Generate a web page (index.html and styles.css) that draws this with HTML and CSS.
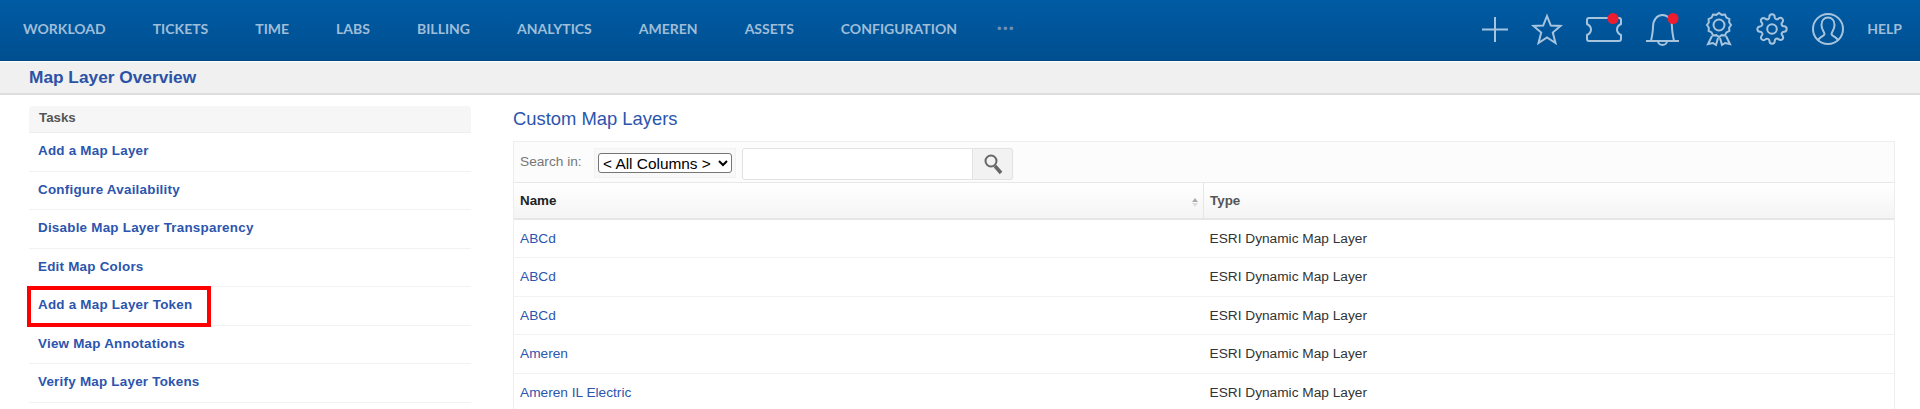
FILE: index.html
```html
<!DOCTYPE html>
<html lang="en">
<head>
  <meta charset="UTF-8" />
  <title>Map Layer Overview</title>
  <link rel="stylesheet" href="styles.css">
</head>
<body>
  <header class="topbar">
    <nav class="main-nav">
      <a href="#">WORKLOAD</a>
      <a href="#">TICKETS</a>
      <a href="#">TIME</a>
      <a href="#">LABS</a>
      <a href="#">BILLING</a>
      <a href="#">ANALYTICS</a>
      <a href="#">AMEREN</a>
      <a href="#">ASSETS</a>
      <a href="#">CONFIGURATION</a>
      <span class="more-dots">•••</span>
    </nav>
    <div class="top-icons">
      <svg class="icon" width="26" height="34" viewBox="0 0 26 34"><path d="M0 17.5H26M13 5V30"/></svg>
      <svg class="icon" width="30" height="34" viewBox="0 0 30 34"><polygon points="15,4 18.8,13.6 28.5,14 20.8,20.5 23.5,31 15,25.5 6.5,31 9.2,20.5 1.5,14 11.2,13.6"/></svg>
      <svg class="icon" width="36" height="34" viewBox="0 0 36 34">
        <path d="M3 6H33Q35 6 35 8V12Q31 14 31 17.5Q31 21 35 23V27Q35 29 33 29H3Q1 29 1 27V23Q5 21 5 17.5Q5 14 1 12V8Q1 6 3 6Z"/>
        <circle class="icon-dot" cx="27" cy="6.5" r="5.5"/>
      </svg>
      <svg class="icon" width="36" height="34" viewBox="0 0 36 34">
        <path d="M0 29H33M5 29C6 24 7 20 7 15C7 8 11 3 16.5 3C22 3 26 8 26 15C26 20 27 24 28 29M12 29A4.5 4 0 0 0 21 29"/>
        <circle class="icon-dot" cx="27" cy="6.5" r="5.5"/>
      </svg>
      <svg class="icon" width="26" height="34" viewBox="0 0 26 34">
        <polygon points="25,13 23.14,15.72 23.39,19 20.42,20.42 19,23.39 15.72,23.14 13,25 10.28,23.14 7,23.39 5.58,20.42 2.61,19 2.86,15.72 1,13 2.86,10.28 2.61,7 5.58,5.58 7,2.61 10.28,2.86 13,1 15.72,2.86 19,2.61 20.42,5.58 23.39,7 23.14,10.28"/>
        <circle cx="13" cy="13" r="5.5"/>
        <path d="M6 24L2 32L7 31L10 33L12 26M20 24L24 32L19 31L16 33L14 26"/>
      </svg>
      <svg class="icon icon-gear" width="32" height="34" viewBox="0 -0.75 24 25.5">
        <circle cx="12" cy="12" r="3.6"/>
        <path d="M19.4 15a1.65 1.65 0 0 0 .33 1.82l.06.06a2 2 0 0 1 0 2.83 2 2 0 0 1-2.83 0l-.06-.06a1.65 1.65 0 0 0-1.82-.33 1.65 1.65 0 0 0-1 1.51V21a2 2 0 0 1-2 2 2 2 0 0 1-2-2v-.09A1.65 1.65 0 0 0 9 19.4a1.65 1.65 0 0 0-1.82.33l-.06.06a2 2 0 0 1-2.83 0 2 2 0 0 1 0-2.83l.06-.06a1.65 1.65 0 0 0 .33-1.82 1.65 1.65 0 0 0-1.51-1H3a2 2 0 0 1-2-2 2 2 0 0 1 2-2h.09A1.65 1.65 0 0 0 4.6 9a1.65 1.65 0 0 0-.33-1.82l-.06-.06a2 2 0 0 1 0-2.83 2 2 0 0 1 2.83 0l.06.06a1.65 1.65 0 0 0 1.82.33H9a1.65 1.65 0 0 0 1-1.51V3a2 2 0 0 1 2-2 2 2 0 0 1 2 2v.09a1.65 1.65 0 0 0 1 1.51 1.65 1.65 0 0 0 1.82-.33l.06-.06a2 2 0 0 1 2.83 0 2 2 0 0 1 0 2.83l-.06.06a1.65 1.65 0 0 0-.33 1.82V9a1.65 1.65 0 0 0 1.51 1H21a2 2 0 0 1 2 2 2 2 0 0 1-2 2h-.09a1.65 1.65 0 0 0-1.51 1z"/>
      </svg>
      <svg class="icon" width="32" height="34" viewBox="0 0 32 34">
        <circle cx="16" cy="17" r="15"/>
        <path d="M6 28.5C7 25 12 24.5 12.5 22C12.5 20 9.5 18 9.5 13C9.5 8 12.5 5.5 16 5.5C19.5 5.5 22.5 8 22.5 13C22.5 18 19.5 20 19.5 22C20 24.5 25 25 26 28.5"/>
      </svg>
      <a class="help-link" href="#">HELP</a>
    </div>
  </header>

  <div class="title-bar">Map Layer Overview</div>

  <div class="content">
    <aside class="tasks">
      <div class="tasks-head">Tasks</div>
      <ul class="task-list">
        <li><a href="#">Add a Map Layer</a></li>
        <li><a href="#">Configure Availability</a></li>
        <li><a href="#">Disable Map Layer Transparency</a></li>
        <li><a href="#">Edit Map Colors</a></li>
        <li class="marked"><a href="#">Add a Map Layer Token</a><span class="red-box"></span></li>
        <li><a href="#">View Map Annotations</a></li>
        <li><a href="#">Verify Map Layer Tokens</a></li>
      </ul>
    </aside>

    <main class="layers">
      <h2>Custom Map Layers</h2>
      <div class="grid-box">
        <div class="search-row">
          <span class="search-label">Search in:</span>
          <div class="select-wrap">
            <select class="column-select">
              <option>&lt; All Columns &gt;</option>
            </select>
          </div>
          <input class="search-input" type="text" />
          <button class="search-btn" type="button">
            <svg width="20" height="22" viewBox="0 0 20 22"><circle cx="8" cy="8" r="5.5"/><path class="handle" d="M12 13L18 20"/></svg>
          </button>
        </div>
        <table class="grid">
          <thead>
            <tr>
              <th class="col-name">Name<span class="sorter"></span></th>
              <th class="col-type">Type</th>
            </tr>
          </thead>
          <tbody>
            <tr><td><a href="#">ABCd</a></td><td>ESRI Dynamic Map Layer</td></tr>
            <tr><td><a href="#">ABCd</a></td><td>ESRI Dynamic Map Layer</td></tr>
            <tr><td><a href="#">ABCd</a></td><td>ESRI Dynamic Map Layer</td></tr>
            <tr><td><a href="#">Ameren</a></td><td>ESRI Dynamic Map Layer</td></tr>
            <tr><td><a href="#">Ameren IL Electric</a></td><td>ESRI Dynamic Map Layer</td></tr>
          </tbody>
        </table>
      </div>
    </main>
  </div>
</body>
</html>
```

FILE: styles.css
```css
:root {
  --nav-text: #9fbdd8;
  --link: #2c55ad;
  --line: #f2f2f2;
}

html, body {
  height: 409px;
  overflow: hidden;
}

body {
  margin: 0;
  background: #fff;
  font-family: "Liberation Sans", Arial, sans-serif;
  font-size: 13.7px;
  color: #333;
}

a {
  text-decoration: none;
  color: var(--link);
}

.topbar {
  height: 61px;
  box-sizing: border-box;
  padding: 0 18px 3px 23px;
  display: flex;
  justify-content: space-between;
  align-items: center;
  background: linear-gradient(#005ba4, #004f90);
  border-bottom: 1px solid #00457f;
}

.main-nav {
  display: flex;
  align-items: center;
  gap: 47px;
}

.main-nav a,
.help-link {
  font-family: Lato, sans-serif;
  font-size: 14px;
  font-weight: 700;
  color: var(--nav-text);
}

.more-dots {
  margin-left: -7px;
  font-size: 13px;
  letter-spacing: 1.5px;
  color: #6f90b2;
}

.top-icons {
  display: flex;
  align-items: center;
  gap: 24px;
}

.icon {
  overflow: visible;
  fill: none;
  stroke: #a6c4de;
  stroke-width: 2;
}

.icon-gear {
  stroke-width: 1.5;
}

.icon-dot {
  fill: #ed1c2e;
  stroke: none;
}

.help-link {
  margin-left: -1px;
}

.main-nav a {
  letter-spacing: 0;
}

.title-bar {
  margin-top: 1px;
  height: 31px;
  padding-left: 29px;
  line-height: 31px;
  background: #f0f0f0;
  border-bottom: 2px solid #ddd;
  font-size: 17.3px;
  font-weight: bold;
  color: #2c52a5;
}

.content {
  display: flex;
  gap: 42px;
  padding: 11px 25px 0 29px;
}

.tasks {
  width: 442px;
  flex: none;
}

.tasks-head {
  height: 26px;
  padding-left: 10px;
  line-height: 23px;
  background: #f6f6f6;
  border-bottom: 1px solid #eee;
  border-radius: 3px 3px 0 0;
  font-size: 13.3px;
  font-weight: bold;
  color: #555;
}

.task-list {
  list-style: none;
  margin: 0;
  padding: 0;
}

.task-list li {
  position: relative;
  height: 38.5px;
  box-sizing: border-box;
  padding-left: 9px;
  line-height: 35px;
  border-bottom: 1px solid var(--line);
}

.task-list a {
  font-size: 13.4px;
  font-weight: bold;
  letter-spacing: 0.24px;
}

.red-box {
  position: absolute;
  left: -2px;
  top: -1px;
  width: 184px;
  height: 41px;
  box-sizing: border-box;
  border: 4px solid #f00;
}

.layers {
  flex: 1;
  min-width: 0;
}

.layers h2 {
  margin: 0;
  height: 25px;
  padding-bottom: 10px;
  line-height: 26px;
  font-size: 18.4px;
  font-weight: normal;
  color: var(--link);
}

.grid-box {
  border: 1px solid #eee;
  border-bottom: none;
}

.search-row {
  height: 41px;
  box-sizing: border-box;
  padding: 6px 0 0 6px;
  display: flex;
  background: #fcfcfc;
  border-bottom: 1px solid #e8e8e8;
}

.search-label {
  width: 74px;
  flex: none;
  line-height: 28px;
  color: #777;
}

.select-wrap {
  height: 30px;
  box-sizing: border-box;
  padding: 4px 3px;
  margin-right: 6px;
  background: #f8f8f8;
  border: 1px solid #f2f2f2;
}

.column-select {
  display: block;
  width: 134px;
  height: 20px;
  padding: 0;
  border: 1px solid #767676;
  border-radius: 3px;
  background: #fff;
  font-family: "Liberation Sans", Arial, sans-serif;
  font-size: 15.4px;
  color: #000;
}

.search-input {
  width: 231px;
  height: 32px;
  box-sizing: border-box;
  border: 1px solid #e2e2e2;
  border-radius: 3px 0 0 3px;
  background: #fff;
}

.search-btn {
  width: 40px;
  height: 32px;
  padding: 0;
  display: flex;
  align-items: center;
  justify-content: center;
  background: #f2f2f2;
  border: 1px solid #e2e2e2;
  border-left: none;
  border-radius: 0 3px 3px 0;
}

.search-btn svg {
  fill: none;
  stroke: #666;
  stroke-width: 2;
}

.search-btn .handle {
  stroke-width: 3.5;
}

.grid {
  width: 100%;
  border-collapse: collapse;
  table-layout: fixed;
}

.grid th {
  height: 35px;
  padding: 0 6px;
  text-align: left;
  background: linear-gradient(#fff, #f4f4f4);
  border-bottom: 2px solid #e6e6e6;
  font-size: 13.4px;
}

.col-name {
  position: relative;
  width: 677px;
  color: #222;
}

.col-type {
  color: #555;
  border-left: 1px solid #e6e6e6;
}

.sorter {
  position: absolute;
  right: 5px;
  top: 15px;
  width: 0;
  height: 0;
  border-left: 3px solid transparent;
  border-right: 3px solid transparent;
  border-bottom: 4px solid #aaa;
}

.sorter::after {
  content: "";
  position: absolute;
  left: -3px;
  top: 5px;
  border-left: 3px solid transparent;
  border-right: 3px solid transparent;
  border-top: 4px solid #ddd;
}

.grid td {
  height: 38.5px;
  box-sizing: border-box;
  padding: 0 6px;
  border-bottom: 1px solid var(--line);
  color: #333;
}
```
